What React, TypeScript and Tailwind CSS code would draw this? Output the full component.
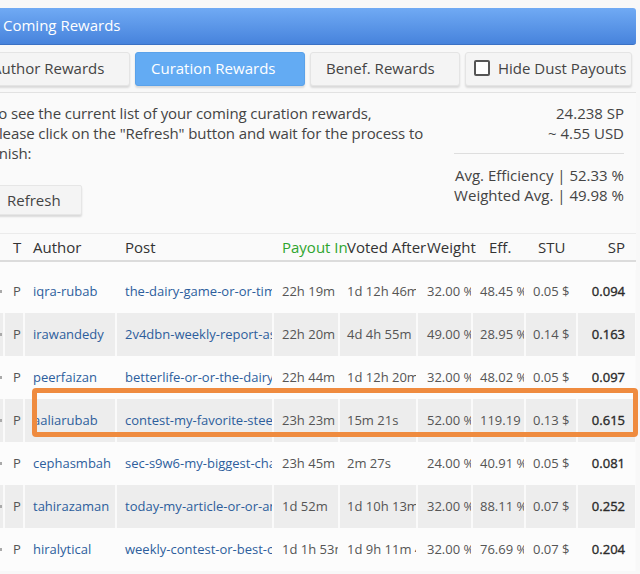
import React from "react";

type Row = {
  t: string;
  author: string;
  post: string;
  payout: string;
  voted: string;
  weight: string;
  eff: string;
  stu: string;
  sp: string;
};

const rows: Row[] = [
  { t: "P", author: "iqra-rubab", post: "the-dairy-game-or-or-time-management", payout: "22h 19m", voted: "1d 12h 46m", weight: "32.00 %", eff: "48.45 %", stu: "0.05 $", sp: "0.094" },
  { t: "P", author: "irawandedy", post: "2v4dbn-weekly-report-as-a-steemian", payout: "22h 20m", voted: "4d 4h 55m", weight: "49.00 %", eff: "28.95 %", stu: "0.14 $", sp: "0.163" },
  { t: "P", author: "peerfaizan", post: "betterlife-or-or-the-dairy-game", payout: "22h 44m", voted: "1d 12h 20m", weight: "32.00 %", eff: "48.02 %", stu: "0.05 $", sp: "0.097" },
  { t: "P", author: "aaliarubab", post: "contest-my-favorite-steemian", payout: "23h 23m", voted: "15m 21s", weight: "52.00 %", eff: "119.19", stu: "0.13 $", sp: "0.615" },
  { t: "P", author: "cephasmbah", post: "sec-s9w6-my-biggest-challenge", payout: "23h 45m", voted: "2m 27s", weight: "24.00 %", eff: "40.91 %", stu: "0.05 $", sp: "0.081" },
  { t: "P", author: "tahirazaman", post: "today-my-article-or-or-an-experience", payout: "1d 52m", voted: "1d 10h 13m", weight: "32.00 %", eff: "88.11 %", stu: "0.07 $", sp: "0.252" },
  { t: "P", author: "hiralytical", post: "weekly-contest-or-best-of-the-week", payout: "1d 1h 53m", voted: "1d 9h 11m 47s", weight: "32.00 %", eff: "76.69 %", stu: "0.07 $", sp: "0.204" },
];

function Tab({ label, active, w }: { label: string; active?: boolean; w: string }) {
  return (
    <div
      className={
        "h-[34px] flex items-center pl-[15px] pb-[2px] rounded-[3px] text-[15px] shadow-[0_2px_2px_rgba(0,0,0,0.12)] " +
        w +
        (active
          ? " bg-[#63abf3] text-white border border-[#5aa2ea]"
          : " bg-[#f4f4f4] text-[#444] border border-[#e4e4e4]")
      }
    >
      {label}
    </div>
  );
}

export default function App() {
  return (
    <div
      className="w-[640px] h-[574px] overflow-hidden bg-[#f8f8f8] relative"
      style={{ fontFamily: '"Open Sans", "Noto Sans", sans-serif' }}
    >
      <div className="ml-[-24px] w-[660px]">
        {/* Header bar */}
        <div className="pt-[8px]">
          <div className="h-[37px] rounded-[3px] bg-gradient-to-b from-[#70aaf4] to-[#4783dc] border-b border-[#3b71c4] flex items-center pl-[27px] pb-[2px] text-white text-[15px]">
            Coming Rewards
          </div>
        </div>

        {/* Tabs */}
        <div className="mt-[7px] flex gap-[5px]">
          <Tab label="Author Rewards" w="w-[154px]" />
          <Tab label="Curation Rewards" w="w-[170px]" active />
          <Tab label="Benef. Rewards" w="w-[150px]" />
          <div className="h-[34px] w-[167px] flex items-center pl-[8px] pb-[2px] rounded-[3px] text-[15px] bg-[#f4f4f4] text-[#444] border border-[#e4e4e4] shadow-[0_2px_2px_rgba(0,0,0,0.12)]">
            <span className="w-[16px] h-[16px] border-2 border-[#555] rounded-[2px] bg-white mr-[8px]" />
            Hide Dust Payouts
          </div>
        </div>

        <div className="mt-[6px] border-t border-[#e2e2e2] bg-[#fafafa]">
          {/* Info */}
          <div className="flex justify-between pt-[10px] pr-[12px] text-[15px] leading-[20px] text-[#444]">
            <div className="pl-[14px] tracking-[-0.1px]">
              <div>
                To see the current list of your coming curation rewards,
                <br />
                Please click on the "Refresh" button and wait for the process to
                <br />
                finish:
              </div>
              <div className="mt-[22px] inline-flex items-center h-[30px] pl-[18px] pr-[20px] ml-[-2px] bg-[#f4f4f4] border border-[#e6e6e6] rounded-[2px] shadow-[0_2px_2px_rgba(0,0,0,0.13)] text-[#444] tracking-normal">
                Refresh
              </div>
            </div>
            <div className="flex flex-col items-stretch text-right">
              <div>24.238 SP</div>
              <div>~ 4.55 USD</div>
              <div className="mt-[10px] mb-[11px] border-t border-[#dedede]" />
              <div>Avg. Efficiency | 52.33 %</div>
              <div>Weighted Avg. | 49.98 %</div>
            </div>
          </div>

          {/* Table */}
          <div className="mt-[18px] border-t border-[#ebebeb]">
            <div className="flex h-[28px] items-center text-[15px] text-[#333] border-b-2 border-[#dcdcdc] whitespace-nowrap">
              <div className="w-[27px] shrink-0" />
              <div className="w-[20px] shrink-0 pl-[10px]">T</div>
              <div className="w-[92px] shrink-0 pl-[10px]">Author</div>
              <div className="w-[157px] shrink-0 pl-[10px]">Post</div>
              <div className="w-[66px] shrink-0 pl-[10px] text-[#2ea52e]">Payout In</div>
              <div className="w-[78px] shrink-0 pl-[9px]">Voted After</div>
              <div className="w-[55px] shrink-0 pl-[11px]">Weight</div>
              <div className="w-[53px] shrink-0 pl-[18px]">Eff.</div>
              <div className="w-[52px] shrink-0 pl-[14px]">STU</div>
              <div className="w-[59px] shrink-0 pr-[10px] text-right">SP</div>
            </div>
            <div className="h-[8px] bg-[#fcfcfc]" />
            {rows.map((r, i) => {
              const gray = i % 2 === 1;
              const bl = gray ? " border-l-2 border-[#fafafa]" : " border-l-2 border-transparent";
              const cell = "shrink-0 h-full flex items-center overflow-hidden whitespace-nowrap";
              return (
                <div
                  key={i}
                  className={
                    "flex h-[43px] w-[659px] text-[13px] text-[#555] " + (gray ? "bg-[#ededed]" : "bg-[#fcfcfc]")
                  }
                >
                  <div className={"w-[27px] justify-end " + cell}>
                    <span className="w-[2px] h-[3px] bg-[#aaa] mr-[1px]" />
                  </div>
                  <div className={"w-[20px] pl-[8px] " + cell + bl}>{r.t}</div>
                  <div className={"w-[92px] pl-[8px] text-[#2d5e9c] " + cell + bl}>{r.author}</div>
                  <div className={"w-[157px] pl-[8px] text-[#2d5e9c] " + cell + bl}>{r.post}</div>
                  <div className={"w-[66px] pl-[8px] " + cell + bl}>{r.payout}</div>
                  <div className={"w-[78px] pl-[7px] " + cell + bl}>{r.voted}</div>
                  <div className={"w-[55px] pl-[9px] " + cell + bl}>{r.weight}</div>
                  <div className={"w-[53px] pl-[7px] " + cell + bl}>{r.eff}</div>
                  <div className={"w-[52px] pl-[7px] " + cell + bl}>{r.stu}</div>
                  <div className={"w-[59px] pr-[10px] justify-end text-[#2a2a2a] [-webkit-text-stroke:0.35px_#2a2a2a] " + cell + bl}>{r.sp}</div>
                </div>
              );
            })}
          </div>
        </div>
      </div>

      {/* Orange annotation box */}
      <div className="absolute left-[32px] top-[388px] w-[606px] h-[49px] border-[5px] border-[#ef8b3f] rounded-[4px]" />
    </div>
  );
}
